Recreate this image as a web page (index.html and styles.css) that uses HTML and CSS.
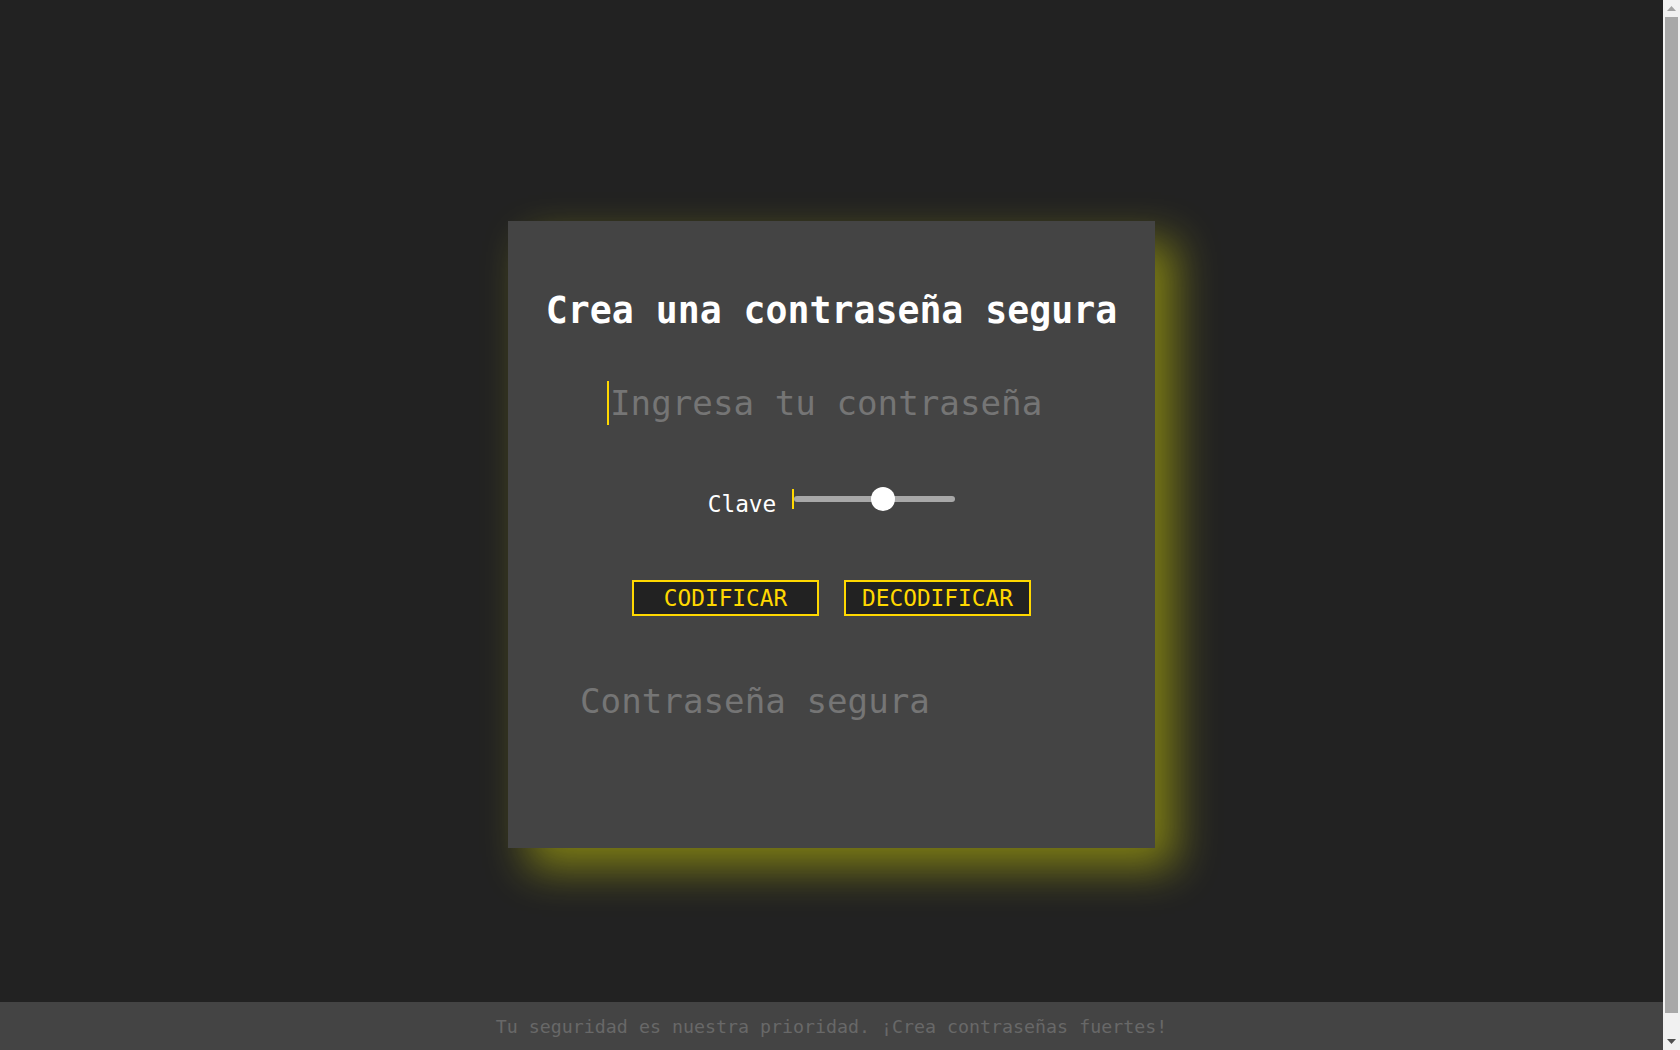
FILE: index.html
```html
<!DOCTYPE html>
<html lang="es">
<head>
<meta charset="utf-8">
<title>Crea una contraseña segura</title>
<link rel="stylesheet" href="styles.css">
</head>
<body>
<main class="page">
  <section class="card">
    <h1 class="title">Crea una contraseña segura</h1>
    <input class="field" type="text" placeholder="Ingresa tu contraseña">
    <div class="key-row">
      <label class="key-label" for="clave">Clave</label>
      <input class="slider" id="clave" type="range" min="0" max="25" value="14">
    </div>
    <div class="actions">
      <button class="btn">CODIFICAR</button>
      <button class="btn">DECODIFICAR</button>
    </div>
    <textarea class="output" placeholder="Contraseña segura" readonly></textarea>
  </section>
</main>
<footer class="footer">Tu seguridad es nuestra prioridad. ¡Crea contraseñas fuertes!</footer>
<aside class="scrollbar" aria-hidden="true">
  <div class="sb-arrow">
    <svg width="9" height="5" viewBox="0 0 9 5"><path d="M0 5 L4.5 0 L9 5 Z" fill="#a3a3a3"/></svg>
  </div>
  <div class="sb-track"><div class="sb-thumb"></div></div>
  <div class="sb-arrow">
    <svg width="9" height="5" viewBox="0 0 9 5"><path d="M0 0 L9 0 L4.5 5 Z" fill="#505050"/></svg>
  </div>
</aside>
</body>
</html>
```

FILE: styles.css
```css
html, body {
  margin: 0;
  padding: 0;
}

body {
  background: #222222;
  font-family: "DejaVu Sans Mono", "Liberation Mono", monospace;
  color: #ffffff;
  margin-right: 17px;
}

.page {
  display: flex;
  justify-content: center;
  padding: 221px 0 154px;
}

.card {
  width: 647px;
  height: 627px;
  box-sizing: border-box;
  background: #444444;
  box-shadow: 20px 20px 40px rgba(255, 255, 0, 0.42);
  padding: 68px 0 0;
  display: flex;
  flex-direction: column;
  align-items: center;
}

.title {
  margin: 0;
  font-size: 36.5px;
  line-height: 44px;
  font-weight: bold;
  color: #ffffff;
  white-space: nowrap;
}

.field {
  margin-top: 48px;
  width: 449px;
  height: 44px;
  box-sizing: border-box;
  padding: 0 0 0 1px;
  border: none;
  border-left: 2px solid #ffd800;
  background: transparent;
  outline: none;
  font-family: inherit;
  font-size: 34.2px;
  color: #ffffff;
}

.field::placeholder,
.output::placeholder {
  color: #757575;
}

.key-row {
  margin-top: 64px;
  display: flex;
  align-items: flex-end;
  gap: 16px;
  font-size: 22.8px;
  color: #ffffff;
}

.key-label {
  line-height: normal;
}

.slider {
  -webkit-appearance: none;
  appearance: none;
  width: 163px;
  height: 20px;
  box-sizing: border-box;
  margin: 0 0 8px 0;
  padding: 0;
  border: none;
  border-left: 2px solid #ffd800;
  background: transparent;
}

.slider::-webkit-slider-runnable-track {
  height: 6px;
  background: #a8a8a8;
  border-radius: 3px;
}

.slider::-webkit-slider-thumb {
  -webkit-appearance: none;
  appearance: none;
  width: 24px;
  height: 24px;
  margin-top: -9px;
  border-radius: 50%;
  background: #ffffff;
  border: none;
}

.actions {
  margin-top: 63px;
  display: flex;
  gap: 25px;
}

.btn {
  width: 187px;
  height: 36px;
  box-sizing: border-box;
  padding: 0;
  background: #222222;
  border: 2px solid #ffd800;
  color: #ffd800;
  font-family: inherit;
  font-size: 22.8px;
}

.output {
  margin-top: 65px;
  width: 503px;
  height: 100px;
  box-sizing: border-box;
  padding: 0;
  border: none;
  background: transparent;
  resize: none;
  outline: none;
  font-family: inherit;
  font-size: 34.2px;
  color: #ffffff;
  overflow: hidden;
}

.footer {
  background: #444444;
  color: #686868;
  text-align: center;
  font-size: 18.3px;
  padding: 14px 0 34px;
}

.scrollbar {
  position: fixed;
  top: 0;
  right: 0;
  width: 17px;
  height: 100vh;
  background: #f1f1f1;
  display: flex;
  flex-direction: column;
}

.sb-arrow {
  height: 17px;
  display: flex;
  align-items: center;
  justify-content: center;
  flex: none;
}

.sb-track {
  flex: 1;
  padding: 0 2px 20px;
  display: flex;
}

.sb-thumb {
  flex: 1;
  background: #a8a8a8;
}
```
